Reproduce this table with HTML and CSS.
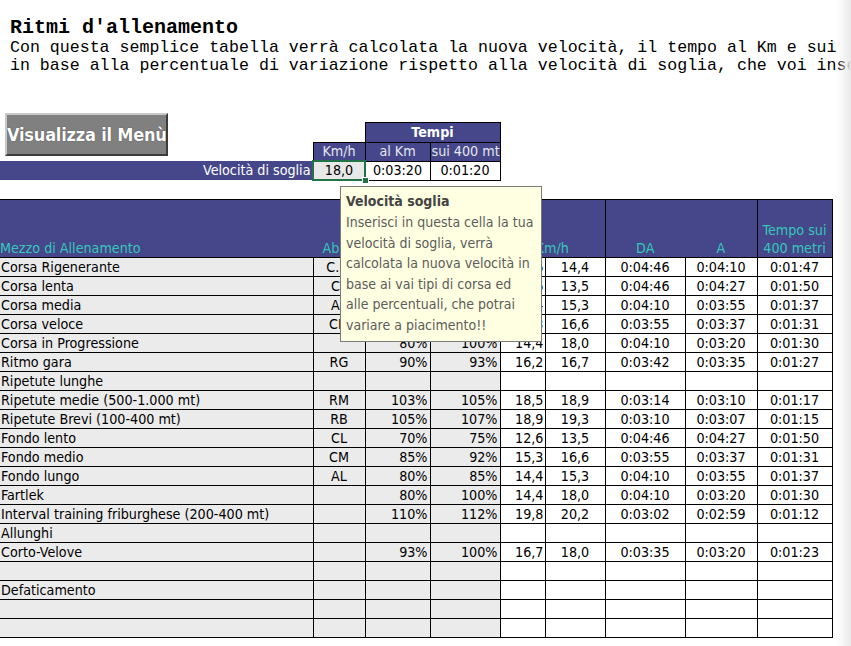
FILE: index.html
```html
<!DOCTYPE html>
<html lang="it">
<head>
<meta charset="utf-8">
<title>Ritmi d'allenamento</title>
<link rel="stylesheet" href="styles.css">
</head>
<body>
<div class="intro">
  <h1 class="title">Ritmi d'allenamento</h1>
  <p class="desc">Con questa semplice tabella verrà calcolata la nuova velocità, il tempo al Km e sui</p>
  <p class="desc">in base alla percentuale di variazione rispetto alla velocità di soglia, che voi inserite.</p>
</div>

<table class="soglia">
  <colgroup><col class="c1"><col class="c2"><col class="c3"><col class="c4"></colgroup>
  <tr class="r-pad">
    <td rowspan="3" class="btn-cell"><div class="menu-btn">Visualizza il Menù</div></td>
    <td></td><td colspan="2"></td>
  </tr>
  <tr class="r-tempi">
    <td></td><td colspan="2" class="hd hd-bold">Tempi</td>
  </tr>
  <tr class="r-sub">
    <td class="hd">Km/h</td><td class="hd">al Km</td><td class="hd clip">sui 400 mt</td>
  </tr>
  <tr class="r-val">
    <td class="band">Velocità di soglia</td>
    <td class="val sel"><span>18,0</span><i class="handle"></i></td>
    <td class="val white">0:03:20</td>
    <td class="val white">0:01:20</td>
  </tr>
</table>

<table class="ritmi">
  <colgroup>
    <col class="k1"><col class="k2"><col class="k3"><col class="k4"><col class="k5"><col class="k6"><col class="k7"><col class="k8"><col class="k9">
  </colgroup>
  <tr class="head">
    <th class="h-left">Mezzo di Allenamento</th>
    <th>Abbr.</th>
    <th>Da</th>
    <th>A</th>
    <th colspan="2" class="h-km">Km/h</th>
    <th class="h-da">DA</th>
    <th class="h-a">A</th>
    <th class="h-t">Tempo sui<br>400 metri</th>
  </tr>
  <tr><td class="n">Corsa Rigenerante</td><td class="ab">C.R.</td><td class="p">70%</td><td class="p">80%</td><td class="v">12,6</td><td class="c">14,4</td><td class="c">0:04:46</td><td class="c">0:04:10</td><td class="c">0:01:47</td></tr>
  <tr><td class="n">Corsa lenta</td><td class="ab">CL</td><td class="p">70%</td><td class="p">75%</td><td class="v">12,6</td><td class="c">13,5</td><td class="c">0:04:46</td><td class="c">0:04:27</td><td class="c">0:01:50</td></tr>
  <tr><td class="n">Corsa media</td><td class="ab">AL</td><td class="p">80%</td><td class="p">85%</td><td class="v">14,4</td><td class="c">15,3</td><td class="c">0:04:10</td><td class="c">0:03:55</td><td class="c">0:01:37</td></tr>
  <tr><td class="n">Corsa veloce</td><td class="ab">CM</td><td class="p">85%</td><td class="p">92%</td><td class="v">15,3</td><td class="c">16,6</td><td class="c">0:03:55</td><td class="c">0:03:37</td><td class="c">0:01:31</td></tr>
  <tr><td class="n">Corsa in Progressione</td><td class="ab"></td><td class="p">80%</td><td class="p">100%</td><td class="v">14,4</td><td class="c">18,0</td><td class="c">0:04:10</td><td class="c">0:03:20</td><td class="c">0:01:30</td></tr>
  <tr><td class="n">Ritmo gara</td><td class="ab">RG</td><td class="p">90%</td><td class="p">93%</td><td class="v">16,2</td><td class="c">16,7</td><td class="c">0:03:42</td><td class="c">0:03:35</td><td class="c">0:01:27</td></tr>
  <tr><td class="n">Ripetute lunghe</td><td class="ab"></td><td class="p"></td><td class="p"></td><td class="v"></td><td class="c"></td><td class="c"></td><td class="c"></td><td class="c"></td></tr>
  <tr><td class="n">Ripetute medie (500-1.000 mt)</td><td class="ab">RM</td><td class="p">103%</td><td class="p">105%</td><td class="v">18,5</td><td class="c">18,9</td><td class="c">0:03:14</td><td class="c">0:03:10</td><td class="c">0:01:17</td></tr>
  <tr><td class="n">Ripetute Brevi (100-400 mt)</td><td class="ab">RB</td><td class="p">105%</td><td class="p">107%</td><td class="v">18,9</td><td class="c">19,3</td><td class="c">0:03:10</td><td class="c">0:03:07</td><td class="c">0:01:15</td></tr>
  <tr><td class="n">Fondo lento</td><td class="ab">CL</td><td class="p">70%</td><td class="p">75%</td><td class="v">12,6</td><td class="c">13,5</td><td class="c">0:04:46</td><td class="c">0:04:27</td><td class="c">0:01:50</td></tr>
  <tr><td class="n">Fondo medio</td><td class="ab">CM</td><td class="p">85%</td><td class="p">92%</td><td class="v">15,3</td><td class="c">16,6</td><td class="c">0:03:55</td><td class="c">0:03:37</td><td class="c">0:01:31</td></tr>
  <tr><td class="n">Fondo lungo</td><td class="ab">AL</td><td class="p">80%</td><td class="p">85%</td><td class="v">14,4</td><td class="c">15,3</td><td class="c">0:04:10</td><td class="c">0:03:55</td><td class="c">0:01:37</td></tr>
  <tr><td class="n">Fartlek</td><td class="ab"></td><td class="p">80%</td><td class="p">100%</td><td class="v">14,4</td><td class="c">18,0</td><td class="c">0:04:10</td><td class="c">0:03:20</td><td class="c">0:01:30</td></tr>
  <tr><td class="n">Interval training friburghese (200-400 mt)</td><td class="ab"></td><td class="p">110%</td><td class="p">112%</td><td class="v">19,8</td><td class="c">20,2</td><td class="c">0:03:02</td><td class="c">0:02:59</td><td class="c">0:01:12</td></tr>
  <tr><td class="n">Allunghi</td><td class="ab"></td><td class="p"></td><td class="p"></td><td class="v"></td><td class="c"></td><td class="c"></td><td class="c"></td><td class="c"></td></tr>
  <tr><td class="n">Corto-Velove</td><td class="ab"></td><td class="p">93%</td><td class="p">100%</td><td class="v">16,7</td><td class="c">18,0</td><td class="c">0:03:35</td><td class="c">0:03:20</td><td class="c">0:01:23</td></tr>
  <tr><td class="n"></td><td class="ab"></td><td class="p"></td><td class="p"></td><td class="v"></td><td class="c"></td><td class="c"></td><td class="c"></td><td class="c"></td></tr>
  <tr><td class="n">Defaticamento</td><td class="ab"></td><td class="p"></td><td class="p"></td><td class="v"></td><td class="c"></td><td class="c"></td><td class="c"></td><td class="c"></td></tr>
  <tr><td class="n"></td><td class="ab"></td><td class="p"></td><td class="p"></td><td class="v"></td><td class="c"></td><td class="c"></td><td class="c"></td><td class="c"></td></tr>
  <tr><td class="n"></td><td class="ab"></td><td class="p"></td><td class="p"></td><td class="v"></td><td class="c"></td><td class="c"></td><td class="c"></td><td class="c"></td></tr>
</table>

<div class="tooltip">
  <div class="tip-title">Velocità soglia</div>
  <div class="tip-body">Inserisci in questa cella la tua<br>velocità di soglia, verrà<br>calcolata la nuova velocità in<br>base ai vai tipi di corsa ed<br>alle percentuali, che potrai<br>variare a piacimento!!</div>
</div>

<div class="edge-shade"></div>
</body>
</html>
```

FILE: styles.css
```css
html, body {
  margin: 0;
  padding: 0;
}
body {
  width: 851px;
  height: 646px;
  overflow: hidden;
  background: #ffffff;
  font-family: "DejaVu Sans Condensed", "DejaVu Sans", sans-serif;
  font-stretch: condensed;
  color: #000;
}

.intro {
  padding: 17px 0 0 10px;
}
.title {
  margin: 0;
  font-family: "Liberation Mono", monospace;
  font-weight: bold;
  font-size: 20px;
  line-height: 22px;
}
.desc {
  margin: 0;
  font-family: "Liberation Mono", monospace;
  font-size: 16.6px;
  line-height: 18px;
  white-space: pre;
}

/* ---------- soglia block ---------- */
.soglia {
  margin-top: 38px;
  border-collapse: collapse;
  table-layout: fixed;
  width: 500px;
  font-size: 14.2px;
}
.soglia .c1 { width: 313px; }
.soglia .c2 { width: 52px; }
.soglia .c3 { width: 65px; }
.soglia .c4 { width: 70px; }
.soglia td {
  padding: 0;
  line-height: 17px;
  white-space: nowrap;
  overflow: hidden;
}
.r-pad { height: 9px; }
.r-tempi { height: 20px; }
.r-sub { height: 19px; }
.r-val { height: 19px; }

.btn-cell {
  vertical-align: top;
  padding-left: 5px !important;
}
.menu-btn {
  width: 163px;
  height: 43px;
  box-sizing: border-box;
  background: #808080;
  border-top: 2px solid #c8c8c8;
  border-left: 2px solid #c8c8c8;
  border-right: 2px solid #3c3c3c;
  border-bottom: 2px solid #3c3c3c;
  color: #ffffff;
  font-weight: bold;
  font-size: 18px;
  line-height: 39px;
  text-align: center;
  letter-spacing: -0.2px;
  text-shadow: 0 0 1px #303030;
}
.hd {
  background: #45478a;
  color: #e6e6ee;
  border: 1px solid #000;
  text-align: center;
}
.hd-bold {
  font-weight: bold;
  color: #ffffff;
}
.clip {
  text-align: left;
  padding-left: 1px !important;
  text-overflow: clip;
}
.band {
  background: #45478a;
  color: #ffffff;
  text-align: right;
  padding-right: 2px !important;
}
.val {
  border: 1px solid #000;
  text-align: center;
}
.white { background: #fff; }
.sel {
  background: #e8e8e8;
  position: relative;
  overflow: visible !important;
  outline: 2px solid #217346;
  outline-offset: -1px;
}
.handle {
  position: absolute;
  right: -4px;
  bottom: -4px;
  width: 5px;
  height: 5px;
  background: #217346;
  border: 1px solid #fff;
}

/* ---------- main table ---------- */
.ritmi {
  margin-top: 18px;
  border-collapse: collapse;
  table-layout: fixed;
  width: 832px;
  font-size: 14.2px;
}
.k1 { width: 313px; }
.k2 { width: 52px; }
.k3 { width: 65px; }
.k4 { width: 70px; }
.k5 { width: 45px; }
.k6 { width: 60px; }
.k7 { width: 80px; }
.k8 { width: 72px; }
.k9 { width: 75px; }

.ritmi tr { height: 19px; }
.ritmi td {
  padding: 1px 0 0 0;
  line-height: 17px;
  border: 1px solid #000;
  white-space: nowrap;
  overflow: hidden;
}
.ritmi td.n {
  border-left: none;
  padding-left: 1px;
  background: #ebebeb;
}
.ritmi td.ab { text-align: center; background: #ebebeb; }
.ritmi td.p { text-align: right; padding-right: 2px; background: #ebebeb; }
.ritmi td.v { text-align: right; padding-right: 1px; background: #fff; }
.ritmi td.c { text-align: center; background: #fff; }

.ritmi .head { height: 58px; }
.ritmi th {
  background: #45478a;
  color: #36c6b8;
  font-weight: normal;
  vertical-align: bottom;
  padding: 0 0 0 0;
  line-height: 18px;
  text-align: center;
  white-space: nowrap;
  overflow: hidden;
  border-top: 1px solid #000;
}
.ritmi th.h-left { text-align: left; }
.ritmi th.h-km { border-right: 1px solid #000; }
.ritmi th.h-t { border-left: 1px solid #000; border-right: 1px solid #000; }

/* ---------- tooltip ---------- */
.tooltip {
  position: absolute;
  left: 340px;
  top: 186px;
  width: 202px;
  height: 156px;
  box-sizing: border-box;
  background: #ffffe1;
  border: 1px solid #7a7a7a;
  padding: 4px 0 0 5px;
  font-size: 14px;
  line-height: 20.5px;
  color: #5c5c5c;
  white-space: nowrap;
}
.tip-title {
  font-weight: bold;
  color: #444444;
  line-height: 21px;
}

.edge-shade {
  position: fixed;
  top: 0;
  right: 0;
  width: 14px;
  height: 100%;
  background: linear-gradient(to right, rgba(236, 236, 236, 0), #e9e9e9);
}
```
